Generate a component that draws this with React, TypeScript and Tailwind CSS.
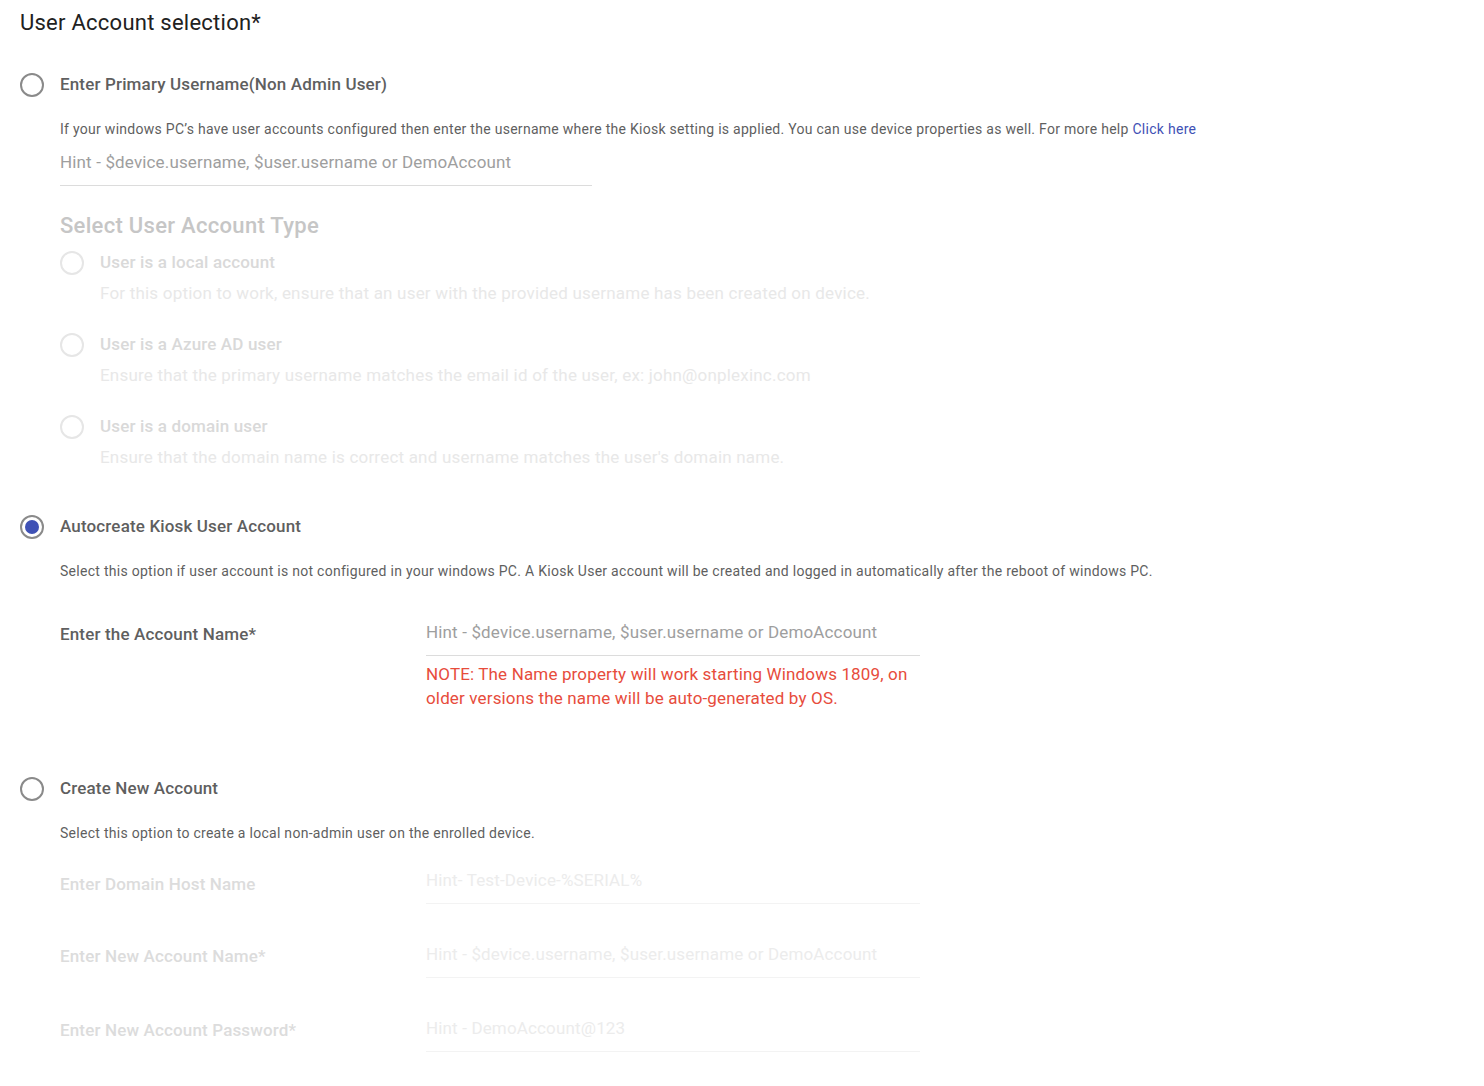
import React from "react";

type RadioProps = { checked?: boolean; faded?: boolean };

function Radio({ checked = false, faded = false }: RadioProps) {
  return (
    <span
      className={`flex h-6 w-6 shrink-0 items-center justify-center rounded-full border-2 ${
        faded ? "border-[#e6e6e6]" : "border-[#8a8a8a]"
      }`}
    >
      {checked && <span className="h-[14px] w-[14px] rounded-full bg-[#3f51b5]" />}
    </span>
  );
}

function HintInput({
  hint,
  width,
  faded = false,
}: {
  hint: string;
  width: string;
  faded?: boolean;
}) {
  return (
    <div
      className={`${width} border-b pb-[11px] text-[17px] leading-6 tracking-[0.15px] ${
        faded ? "border-[#f3f3f3] text-[#ececec]" : "border-[#dcdcdc] text-[#9e9e9e]"
      }`}
    >
      {hint}
    </div>
  );
}

const accountTypes = [
  {
    label: "User is a local account",
    help: "For this option to work, ensure that an user with the provided username has been created on device.",
  },
  {
    label: "User is a Azure AD user",
    help: "Ensure that the primary username matches the email id of the user, ex: john@onplexinc.com",
  },
  {
    label: "User is a domain user",
    help: "Ensure that the domain name is correct and username matches the user's domain name.",
  },
];

const newAccountFields = [
  { label: "Enter Domain Host Name", hint: "Hint- Test-Device-%SERIAL%", offset: "mt-[4px]" },
  {
    label: "Enter New Account Name*",
    hint: "Hint - $device.username, $user.username or DemoAccount",
    offset: "mt-[2px]",
  },
  { label: "Enter New Account Password*", hint: "Hint - DemoAccount@123", offset: "mt-[2px]" },
];

export default function App() {
  return (
    <div
      className="min-h-[1086px] bg-white px-5 pt-[9px] text-[#5f5f5f]"
      style={{ fontFamily: "Roboto, 'Noto Sans', Arial, sans-serif" }}
    >
      <h2 className="text-[22px] leading-7 tracking-[0.25px] text-[#212121]">
        User Account selection*
      </h2>

      {/* primary username */}
      <div className="mt-9 flex items-start gap-4">
        <Radio />
        <span className="text-[17px] font-medium leading-[22px] tracking-[0.15px]">
          Enter Primary Username(Non Admin User)
        </span>
      </div>
      <div className="pl-10">
        <p className="mt-[22px] text-[14px] leading-5 tracking-[0.28px]">
          If your windows PC’s have user accounts configured then enter the username where the Kiosk
          setting is applied. You can use device properties as well. For more help{" "}
          <a className="text-[#3f51b5]">Click here</a>
        </p>
        <div className="mt-[11px]">
          <HintInput hint="Hint - $device.username, $user.username or DemoAccount" width="w-[532px]" />
        </div>

        <h3 className="mt-[26px] text-[22px] font-medium leading-7 tracking-[0.3px] text-[#c6c6c6]">
          Select User Account Type
        </h3>
        <div className="mt-[11px] flex flex-col gap-[28px]">
          {accountTypes.map((t) => (
            <div key={t.label}>
              <div className="flex items-start gap-4">
                <Radio faded />
                <span className="text-[17px] font-medium leading-[22px] tracking-[0.15px] text-[#d9d9d9]">
                  {t.label}
                </span>
              </div>
              <p className="mt-[6px] pl-10 text-[17px] leading-6 tracking-[0.2px] text-[#e8e8e8]">
                {t.help}
              </p>
            </div>
          ))}
        </div>
      </div>

      {/* autocreate kiosk */}
      <div className="mt-[46px] flex items-start gap-4">
        <Radio checked />
        <span className="text-[17px] font-medium leading-[22px] tracking-[0.15px]">
          Autocreate Kiosk User Account
        </span>
      </div>
      <div className="pl-10">
        <p className="mt-[22px] text-[14px] leading-5 tracking-[0.28px]">
          Select this option if user account is not configured in your windows PC. A Kiosk User
          account will be created and logged in automatically after the reboot of windows PC.
        </p>
        <div className="mt-[39px] flex">
          <span className="mt-[2px] w-[366px] shrink-0 text-[17px] font-medium leading-6 tracking-[0.15px]">
            Enter the Account Name*
          </span>
          <div className="w-[494px]">
            <HintInput hint="Hint - $device.username, $user.username or DemoAccount" width="w-full" />
            <p className="mt-[6px] text-[17px] leading-6 tracking-[0.15px] text-[#e74c3c]">
              NOTE: The Name property will work starting Windows 1809, on older versions the name
              will be auto-generated by OS.
            </p>
          </div>
        </div>
      </div>

      {/* create new account */}
      <div className="mt-[67px] flex items-start gap-4">
        <Radio />
        <span className="text-[17px] font-medium leading-[22px] tracking-[0.15px]">
          Create New Account
        </span>
      </div>
      <div className="pl-10">
        <p className="mt-[22px] text-[14px] leading-5 tracking-[0.28px]">
          Select this option to create a local non-admin user on the enrolled device.
        </p>
        <div className="mt-[25px] flex flex-col gap-[38px]">
          {newAccountFields.map((f) => (
            <div key={f.label} className="flex">
              <span
                className={`${f.offset} w-[366px] shrink-0 text-[17px] font-medium leading-6 tracking-[0.15px] text-[#dcdcdc]`}
              >
                {f.label}
              </span>
              <HintInput hint={f.hint} width="w-[494px]" faded />
            </div>
          ))}
        </div>
      </div>
    </div>
  );
}
